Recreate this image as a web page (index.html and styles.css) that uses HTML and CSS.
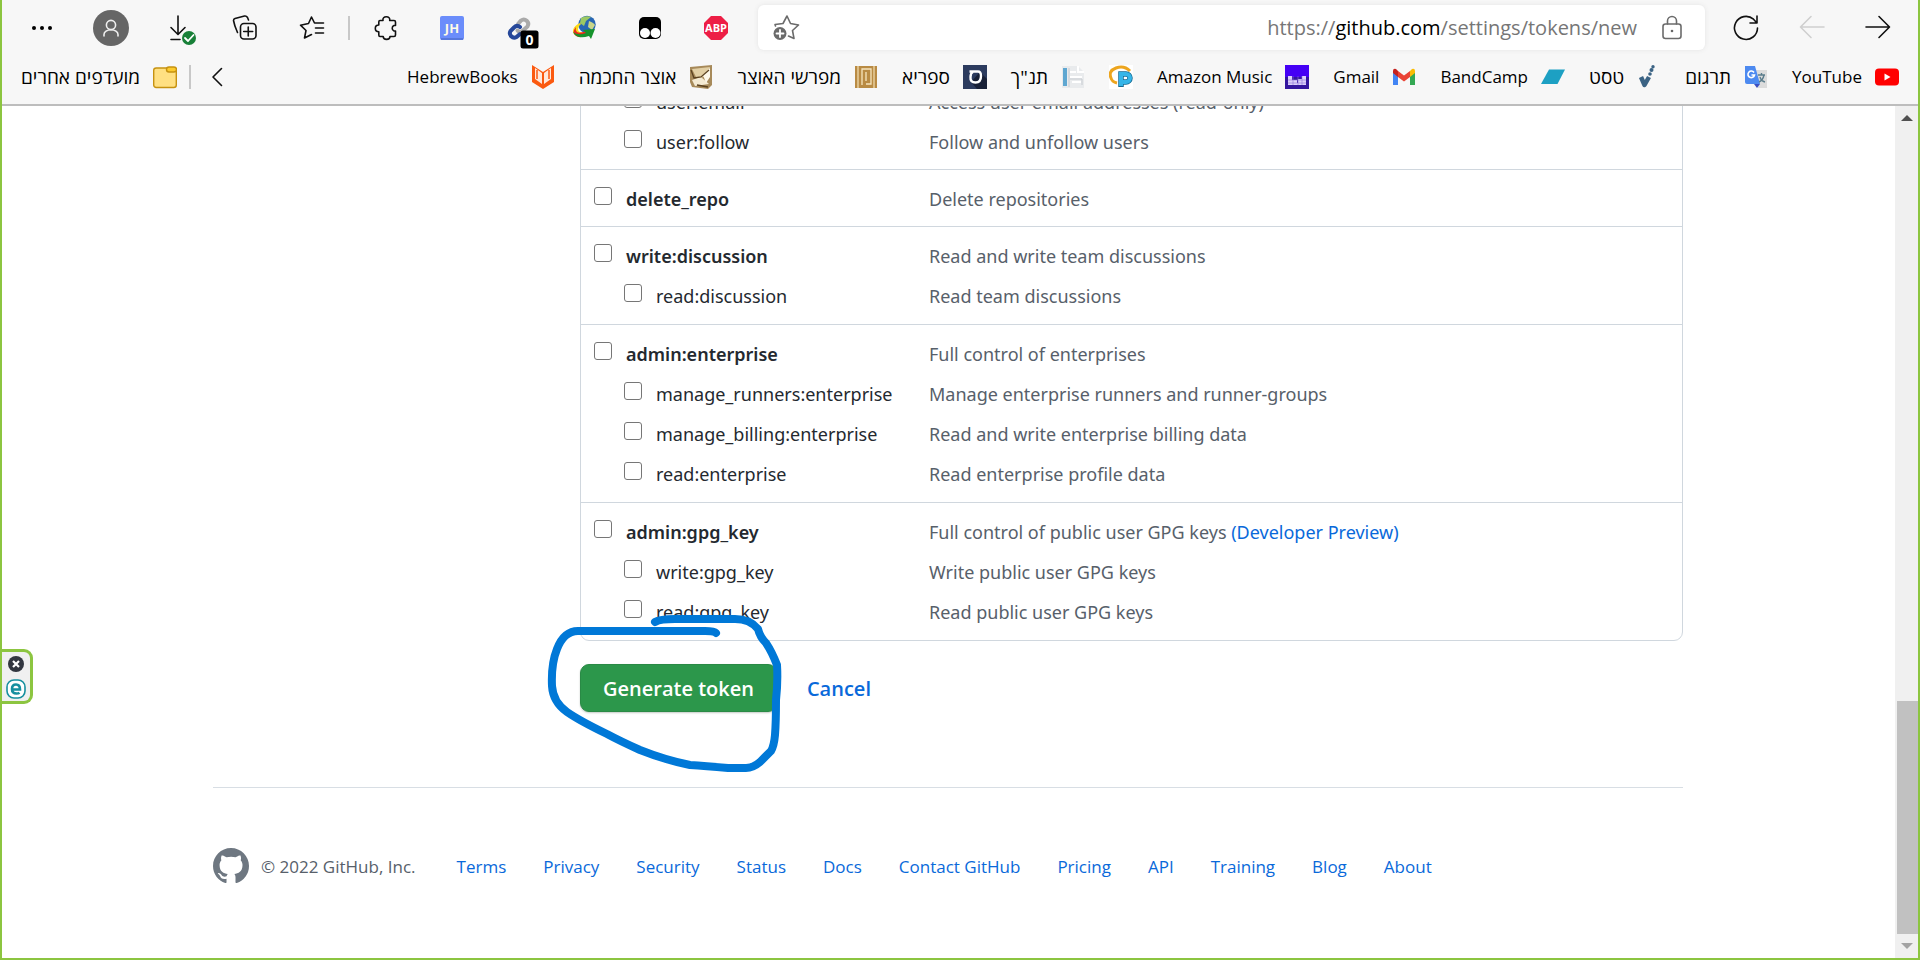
FILE: index.html
```
<!DOCTYPE html>
<html lang="en">
<head>
<meta charset="utf-8">
<title>New personal access token</title>
<link rel="stylesheet" href="styles.css">
</head>
<body>
<div class="window">
  <header class="chrome">
    <div class="toolbar">
      <div class="tools tools-main">
        <button class="tool" aria-label="More"><svg width="24" height="24" viewBox="0 0 24 24"><circle cx="2" cy="12" r="2"/><circle cx="10" cy="12" r="2"/><circle cx="18" cy="12" r="2"/></svg></button>
        <button class="tool avatar" aria-label="Profile"><svg class="line" width="24" height="24" viewBox="0 0 24 24"><circle cx="12" cy="9" r="4.600"/><path d="M5 20v-1.500a7 4.800 0 0 1 14 0V20"/></svg></button>
        <button class="tool" aria-label="Downloads"><svg class="line" width="42" height="26" viewBox="-13 0 42 26"><path d="M8 1v18M1 12.500l7 7 7-7M1 24.500h9"/><circle cx="19" cy="23" r="7" fill="#188038" stroke="none"/><path d="M15 23l3 3 5.500-6" stroke="#fff" stroke-width="1.800"/></svg></button>
        <button class="tool" aria-label="Collections"><svg class="line" width="26" height="26" viewBox="0 0 26 26"><path d="M5.500 17.500C3.500 13 2 8.500 1.500 5.500Q1.500 4 3 3.500L12.500 1Q14.500.700 15.500 2.500L16.500 5"/><rect x="8.500" y="8.500" width="15.500" height="15.500" rx="3.500"/><path d="M16.250 12v9M11.700 16.500h9"/></svg></button>
        <button class="tool" aria-label="Favorites"><svg class="line" width="26" height="26" viewBox="0 0 26 26"><path d="M22 8h-6.500L12.500 2 9.500 8.500 1.500 10.200 7 15.500 5.500 23 12.500 19.500M16.500 13h8M16.500 18h8M17 8h7.500"/></svg></button>
      </div>
      <span class="divider"></span>
      <div class="tools">
        <button class="tool" aria-label="Extensions"><svg class="line" width="24" height="24" viewBox="0 0 24 24"><path d="M9 4.500C8.500 2 10 .800 12.300.800S16.200 2 15.700 4.500H20Q21.500 4.500 21.500 6V9.500H20A3 3 0 0 0 20 15H21.500V19Q21.500 20.500 20 20.500H16C16 22.600 14.600 23.400 12.600 23.400S9.200 22.600 9.200 20.500H6Q4.800 20.500 4.800 19V15.800C2.500 15.800 1.300 14.500 1.300 12.300S2.500 9 4.800 9V6Q4.800 4.500 6 4.500Z"/></svg></button>
        <button class="tool" aria-label="JH"><svg width="24" height="24" viewBox="0 0 24 24"><rect width="24" height="24" rx="2" fill="#6b8dfb"/><path d="M1 23h22" stroke="#5777dc" stroke-width="2"/><text x="12" y="17" class="icon-text" font-size="13" fill="#fffbe8">JH</text></svg></button>
        <button class="tool" aria-label="Links"><svg width="26" height="26" viewBox="0 0 26 26"><g fill="none" stroke-width="4" stroke-linecap="round"><path d="M13 9l3-3.500a4.500 4.500 0 0 1 6.500 6L18 15.500q-3 2.500-5.500 0" stroke="#aaa"/><path d="M15 12q-3-2.500-6 .500l-3.500 3.500a4.400 4.400 0 0 0 6 6L15 19" stroke="#26489a"/></g><rect x="15.500" y="15.500" width="18" height="18" rx="2.500"/><text x="24.500" y="30" class="icon-text" font-size="14" fill="#fff">0</text></svg></button>
        <button class="tool" aria-label="Download manager"><svg width="26" height="26" viewBox="0 0 26 26"><circle cx="16" cy="9.500" r="8.700" fill="#2867b4"/><path d="M10 3q5-3 10-1l-5 4-2 5-4-3z" fill="#9cc963"/><path d="M18 6q5 2 6 4l-3 5-4-3z" fill="#c9d68a"/><path d="M9 8C2 11 0 17 4 20q5 3 11 0l-2-3q-6 1-6-3 0-3 3-5z" fill="#fbdb17"/><path d="M5 12Q0 18 5 21t13-2l-3-3q-6 3-9 1-2-2-1-5z" fill="#e52b20"/><path d="M2 17q4 8 16 4l2 3 4-10-12 1 3 3Q7 21 2 17z" fill="#16932c"/></svg></button>
        <button class="tool" aria-label="Script manager"><svg width="24" height="24" viewBox="0 0 24 24"><rect x="1" y="1" width="22" height="22" rx="5"/><circle cx="7" cy="17" r="5" fill="#fff"/><circle cx="17.500" cy="17" r="5" fill="#fff"/></svg></button>
        <button class="tool" aria-label="Adblock"><svg width="26" height="26" viewBox="0 0 26 26"><path d="M8 1h10l7 7v10l-7 7H8l-7-7V8z" fill="#ed1e45"/><text x="13" y="17" class="icon-text" font-size="11" fill="#fff">ABP</text></svg></button>
      </div>
      <div class="address">
        <button class="address-icon" aria-label="Add to favorites"><svg class="line grey" width="28" height="28" viewBox="0 0 28 28"><path d="M3.500 12L3 10.500 11 9.500 15 2 18.500 9.500 26.500 11 20.500 16.500 22 24.500 16.500 22"/><circle cx="8" cy="19.500" r="6.500" fill="#6b6b6b" stroke="none"/><path d="M8 16v7M4.500 19.500h7" stroke="#fff" stroke-width="1.800"/></svg></button>
        <a class="url" href="#">https://<span class="host">github.com</span>/settings/tokens/new</a>
        <button class="address-icon" aria-label="Site information"><svg class="line grey" width="22" height="26" viewBox="0 0 22 26"><rect x="2" y="9" width="18" height="14.500" rx="2.500"/><path d="M6.500 9V6a4.500 4.500 0 0 1 9 0v3"/><circle cx="11" cy="16" r="1.300" fill="#666" stroke="none"/></svg></button>
      </div>
      <div class="tools">
        <button class="tool" aria-label="Refresh"><svg class="line" width="26" height="26" viewBox="0 0 26 26"><path d="M24.500 13A11.500 11.500 0 1 1 20.500 4.200L23.500 7.500M24 1v7h-7"/></svg></button>
        <button class="tool" aria-label="Back" disabled><svg class="line pale" width="26" height="26" viewBox="0 0 26 26"><path d="M25 12H1.500M12 1.500L1.500 12 12 22.500"/></svg></button>
        <button class="tool" aria-label="Forward"><svg class="line" width="26" height="26" viewBox="0 0 26 26"><path d="M1 12h23M14 1.500L24.500 12 14 22.500"/></svg></button>
      </div>
    </div>
    <nav class="bookmarks">
      <a class="mark" href="#"><span class="he" lang="he">מועדפים אחרים</span><svg width="24" height="24" viewBox="0 0 24 24"><rect x=".700" y="3" width="22.600" height="19.500" rx="2.500" fill="#ffe082" stroke="#c69210" stroke-width="1.400"/><rect x="13.500" y="2" width="10" height="5" rx="2.500" fill="#fccb2e" stroke="#c69210" stroke-width="1.400"/></svg></a>
      <span class="divider"></span>
      <button class="overflow" aria-label="More bookmarks"><svg class="line" width="12" height="20" viewBox="0 0 12 20"><path d="M10.500 1.500L2 10l8.500 8.500"/></svg></button>
      <div class="marks">
        <a class="mark" href="#"><span>HebrewBooks</span><svg width="24" height="24" viewBox="0 0 24 24"><path d="M1 0L12 7 23 0V17L12 24 1 17Z" fill="#fb5a10"/><path d="M4 3l7 5v11l-7-5zM20 3l-7 5v11l7-5z" fill="#ffe9dc"/><path d="M6 5v9M18 5v9" stroke="#fb5a10" stroke-width="1.500"/></svg></a>
        <a class="mark" href="#"><span class="he" lang="he">אוצר החכמה</span><svg width="24" height="24" viewBox="0 0 24 24"><path d="M1 2L23 0v20l-4 4-16-2-2-5z" fill="#a78a5a"/><path d="M3 4l18-2-3 9-10 3z" fill="#e2cfa4"/><path d="M3 15l9-3 8 7-14 2z" fill="#f4ead2"/><path d="M14 10l7-7v9l-4 6z" fill="#fdf8ea"/><path d="M2 5l3 8 7-1 8-7M8 20l11 2" stroke="#5b4220" stroke-width="1.300" fill="none"/></svg></a>
        <a class="mark" href="#"><span class="he" lang="he">מפרשי האוצר</span><svg width="24" height="24" viewBox="0 0 24 24"><rect x="1" y="1" width="22" height="22" fill="#b98b44"/><path d="M4 1v22M20 1v22" stroke="#f3dfb2" stroke-width="1.200"/><path d="M8 20V4h9v15h-5M12 7v9" stroke="#f6e5bd" stroke-width="1.300" fill="none"/></svg></a>
        <a class="mark" href="#"><span class="he" lang="he">ספריא</span><svg width="24" height="24" viewBox="0 0 24 24"><path d="M0 0h24v24H0z" fill="#2c3b5e"/><path d="M17 7l7 7v10H14l-6-7z" fill="#182036"/><path d="M6.500 6.500H15q3 0 3 4.500 0 6.500-5.500 6.500T7.500 12q0-4 2.500-5" fill="none" stroke="#fff" stroke-width="2.400"/></svg></a>
        <a class="mark" href="#"><span class="he" lang="he">תנ"ך</span><svg width="24" height="24" viewBox="0 0 24 24"><path d="M1 1h16l6 6v16H1z" fill="#e9ebed"/><path d="M2 3h4v18H2z" fill="#5fa7d1"/><path d="M17 1v6h6M9 7h6M9 12h12M11 17h9" stroke="#fff" stroke-width="2" fill="none"/><path d="M8 3v19M9 14h12v6" stroke="#c7cbd0" fill="none"/></svg></a>
        <a class="mark" href="#" aria-label="CP"><svg width="24" height="24" viewBox="0 0 24 24"><path d="M0 0h24v24H0z" fill="#fff"/><path d="M21 6Q15 0 7 3T2 13q1 4 6 5" stroke="#eda51e" stroke-width="3" fill="none"/><path d="M12 22V9h5a4 4 0 0 1 0 8h-4" stroke="#176a91" stroke-width="5.500" fill="none"/><path d="M12 21V9h5a4 4 0 0 1 0 8h-4" stroke="#35b5e8" stroke-width="4" fill="none"/></svg></a>
        <a class="mark" href="#"><span>Amazon Music</span><svg width="24" height="24" viewBox="0 0 24 24"><path d="M0 0h24v24H0z" fill="#4400f5"/><path d="M0 12h24v12H0z" fill="#34169f"/><path d="M3 11h4v4h5v3h1v-4h4v-3h4v9H3z" fill="#dcd0fa"/><path d="M3 15h18M3 18h18M8 11v9M13 11v9M17 11v9" stroke="#8e72d9" stroke-width=".600"/></svg></a>
        <a class="mark" href="#"><span>Gmail</span><svg width="24" height="24" viewBox="0 0 24 24"><path d="M1 6v14h5V10z" fill="#4285f4"/><path d="M18 10v10h5V6z" fill="#34a853"/><path d="M6 6l6 4.500L18 6v6l-6 4.500L6 12z" fill="#ea4335"/><path d="M1 8V6q0-3 3-2l2 2v6z" fill="#c5221f"/><path d="M23 8V6q0-3-3-2l-2 2v6z" fill="#fbbc04"/></svg></a>
        <a class="mark" href="#"><span>BandCamp</span><svg width="24" height="24" viewBox="0 0 24 24"><path d="M8 4.500h16L16.500 19H0z" fill="#1da0c3"/></svg></a>
        <a class="mark" href="#"><span class="he" lang="he">טסט</span><svg width="24" height="24" viewBox="0 0 24 24"><path d="M4 12l3.500 8L12 12" stroke="#3b6384" stroke-width="4.500" fill="none" stroke-linejoin="round"/><g fill="#3b6384"><circle cx="13" cy="9" r="1.800"/><circle cx="14.500" cy="5" r="2"/><circle cx="16" cy="1.800" r="1.700"/></g></svg></a>
        <a class="mark" href="#"><span class="he" lang="he">תרגום</span><svg width="24" height="24" viewBox="0 0 24 24"><path d="M9 5h14v18H14z" fill="#dcdcdc"/><path d="M1 1h10l5 18H3q-2 0-2-2z" fill="#4d8af0"/><path d="M10 19h6l-3 4z" fill="#3b4fc0"/><path d="M14 10h7M17.500 8v2M20 10q-1 5-5 7M16 12q1 4 5 5" stroke="#5b7d8c" stroke-width="1.400" fill="none"/><path d="M10 7.500A3.300 3.300 0 1 0 10.500 10H7.500" stroke="#fff" stroke-width="1.600" fill="none"/></svg></a>
        <a class="mark" href="#"><span>YouTube</span><svg width="24" height="24" viewBox="0 0 24 24"><rect y="3.500" width="24" height="17" rx="4" fill="#f00"/><path d="M9.500 8.500v7l6-3.500z" fill="#fff"/></svg></a>
      </div>
    </nav>
  </header>

  <div class="viewport">
    <div class="page">
      <main class="content">
        <ul class="scopes">
          <li class="scope">
            <div class="row sub"><input type="checkbox" id="s1"><label for="s1">user:email</label><span class="desc">Access user email addresses (read-only)</span></div>
            <div class="row sub"><input type="checkbox" id="s2"><label for="s2">user:follow</label><span class="desc">Follow and unfollow users</span></div>
          </li>
          <li class="scope">
            <div class="row"><input type="checkbox" id="s3"><label for="s3">delete_repo</label><span class="desc">Delete repositories</span></div>
          </li>
          <li class="scope">
            <div class="row"><input type="checkbox" id="s4"><label for="s4">write:discussion</label><span class="desc">Read and write team discussions</span></div>
            <div class="subs">
              <div class="row sub"><input type="checkbox" id="s5"><label for="s5">read:discussion</label><span class="desc">Read team discussions</span></div>
            </div>
          </li>
          <li class="scope">
            <div class="row"><input type="checkbox" id="s6"><label for="s6">admin:enterprise</label><span class="desc">Full control of enterprises</span></div>
            <div class="subs">
              <div class="row sub"><input type="checkbox" id="s7"><label for="s7">manage_runners:enterprise</label><span class="desc">Manage enterprise runners and runner-groups</span></div>
              <div class="row sub"><input type="checkbox" id="s8"><label for="s8">manage_billing:enterprise</label><span class="desc">Read and write enterprise billing data</span></div>
              <div class="row sub"><input type="checkbox" id="s9"><label for="s9">read:enterprise</label><span class="desc">Read enterprise profile data</span></div>
            </div>
          </li>
          <li class="scope">
            <div class="row"><input type="checkbox" id="s10"><label for="s10">admin:gpg_key</label><span class="desc">Full control of public user GPG keys <a href="#">(Developer Preview)</a></span></div>
            <div class="subs">
              <div class="row sub"><input type="checkbox" id="s11"><label for="s11">write:gpg_key</label><span class="desc">Write public user GPG keys</span></div>
              <div class="row sub"><input type="checkbox" id="s12"><label for="s12">read:gpg_key</label><span class="desc">Read public user GPG keys</span></div>
            </div>
          </li>
        </ul>
        <div class="actions">
          <button class="generate">Generate token</button>
          <a class="cancel" href="#">Cancel</a>
          <svg class="ink" width="250" height="170" viewBox="540 610 250 170"><path d="M655 622Q660 619 675 619L735 619Q750 619 758 629Q760 637 766 643Q772 652 777 665Q778 682 776 700Q776 722 775 735Q774 746 771 751L760 762Q753 768 746 768L728 768Q705 766 690 765Q665 760 640 750Q620 741 607 734Q580 721 567 712Q553 702 552 686Q551 664 557 649Q564 631 578 631L705 631Q714 631 716 633"/></svg>
        </div>
      </main>
      <footer class="footer">
        <svg width="36" height="36" viewBox="0 0 16 16" fill="#6e7781"><path d="M8 0C3.580 0 0 3.580 0 8c0 3.540 2.290 6.530 5.470 7.590.400.070.550-.170.550-.380 0-.190-.010-.820-.010-1.490-2.010.370-2.530-.490-2.690-.940-.090-.230-.480-.940-.820-1.130-.280-.150-.680-.520-.010-.530.630-.010 1.080.580 1.230.820.720 1.210 1.870.870 2.330.660.070-.520.280-.870.510-1.070-1.780-.200-3.640-.890-3.640-3.950 0-.870.310-1.590.820-2.150-.080-.200-.360-1.020.080-2.120 0 0 .670-.210 2.200.820.640-.180 1.320-.270 2-.270s1.360.090 2 .270c1.530-1.040 2.200-.820 2.200-.820.440 1.100.160 1.920.080 2.120.510.560.820 1.270.820 2.150 0 3.070-1.870 3.750-3.650 3.950.290.250.540.730.540 1.480 0 1.070-.010 1.930-.010 2.200 0 .210.150.460.550.380A8.010 8.010 0 0 0 16 8c0-4.420-3.580-8-8-8z"/></svg>
        <span class="copyright">© 2022 GitHub, Inc.</span>
        <nav class="links"><a href="#">Terms</a><a href="#">Privacy</a><a href="#">Security</a><a href="#">Status</a><a href="#">Docs</a><a href="#">Contact GitHub</a><a href="#">Pricing</a><a href="#">API</a><a href="#">Training</a><a href="#">Blog</a><a href="#">About</a></nav>
      </footer>
    </div>
    <div class="scrollbar">
      <svg class="arrow" width="12" height="6" viewBox="0 0 12 6" fill="#505050"><path d="M6 0l6 6H0z"/></svg>
      <div class="track"><div class="thumb"></div></div>
      <svg class="arrow" width="12" height="6" viewBox="0 0 12 6" fill="#a3a3a3"><path d="M0 0h12L6 6z"/></svg>
    </div>
    <aside class="dock">
      <button aria-label="Close"><svg width="20" height="20" viewBox="0 0 20 20"><circle cx="10" cy="10" r="8" fill="#32363f"/><path d="M7 7l6 6M13 7l-6 6" stroke="#fff" stroke-width="2.200"/></svg></button>
      <button aria-label="Open"><svg width="20" height="20" viewBox="0 0 20 20"><rect x="1" y="1" width="18" height="18" rx="7" fill="#fff" stroke="#168f9f" stroke-width="1.600"/><path d="M6 10.500h8Q14 5.500 10 5.500T6 10q0 4.500 4.500 4.500 2 0 3-.800" fill="none" stroke="#168f9f" stroke-width="2.600"/></svg></button>
    </aside>
  </div>
</div>
</body>
</html>
```

FILE: styles.css
```
* { box-sizing: border-box; }

body {
  margin: 0;
  font-family: "Open Sans", "Noto Sans", "DejaVu Sans", sans-serif;
  font-size: 18px;
  color: #24292f;
  background: #fff;
}

a { color: #0969da; text-decoration: none; }

button {
  display: flex;
  align-items: center;
  justify-content: center;
  padding: 0;
  border: 0;
  background: none;
  font-family: inherit;
}

.window {
  display: flex;
  flex-direction: column;
  height: 100vh;
  border: solid #8cc540;
  border-width: 0 2px 2px;
}

.chrome {
  flex: none;
  background: #f7f7f7;
  border-bottom: 2px solid #bdbdbd;
}

.toolbar {
  display: flex;
  align-items: center;
  padding: 5px 22px 5px 24px;
}

.tools { display: flex; gap: 30px; }
.tools-main { gap: 31px; }
.tool { width: 36px; height: 36px; }
.tool svg { flex: none; overflow: visible; }
.line { fill: none; stroke: #111; stroke-width: 1.6px; stroke-linecap: round; stroke-linejoin: round; }
.grey { stroke: #6b6b6b; }
.pale { stroke: #cfcfcf; }
.icon-text { font-family: "Open Sans", sans-serif; font-weight: 700; text-anchor: middle; }

.avatar { border-radius: 50%; background: #666; }
.avatar .line { stroke: #eee; }

.divider { width: 2px; height: 24px; background: #c8c8c8; margin: 0 18px; }

.address {
  flex: 1;
  display: flex;
  align-items: center;
  height: 45px;
  margin: 0 23px 0 24px;
  padding: 0 22px 0 14px;
  border-radius: 6px;
  background: #fff;
  box-shadow: 0 0 5px #e4e4e4;
}

.url { margin-left: auto; margin-right: 24px; font-size: 20px; color: #767676; }
.host { color: #000; }

.bookmarks {
  display: flex;
  align-items: center;
  height: 49px;
  padding: 0 19px 5px;
}

.bookmarks .divider { margin: 0 20px 0 12px; }
.marks { flex: 1; display: flex; justify-content: flex-end; gap: 24px; }
.mark { display: flex; align-items: center; gap: 13px; font-size: 17px; line-height: 24px; color: #000; white-space: nowrap; }
.mark svg { flex: none; }
.he { font-size: 19px; }

.viewport { position: relative; flex: 1; min-height: 0; display: flex; }

.page {
  flex: 1;
  display: flex;
  flex-direction: column;
  justify-content: flex-end;
  align-items: center;
  padding-right: 1px;
  overflow: hidden;
}

.content, .footer { width: 100%; max-width: 1470px; }
.content { padding-left: 367px; font-family: "Noto Sans", "Open Sans", sans-serif; }

.scopes {
  margin: 0;
  padding: 0;
  list-style: none;
  border: 1px solid #d0d7de;
  border-radius: 9px;
}

.scope { padding: 9px 0 7px 13px; }
.scope + .scope { border-top: 1px solid #d0d7de; }
.subs { margin-bottom: 8px; }
.scope:has(.subs) { padding-bottom: 0; }

.row { display: grid; grid-template-columns: 32px 303px 1fr; align-items: center; height: 40px; font-weight: 600; }
.row.sub { grid-template-columns: 32px 273px 1fr; padding-left: 30px; font-weight: 400; }
.desc { font-weight: 400; color: #57606a; }

.row input {
  appearance: none;
  width: 18px;
  height: 18px;
  margin: 0 0 6px;
  border: 1px solid #767676;
  border-radius: 3px;
  background: #fff;
}

.actions { position: relative; display: flex; align-items: center; gap: 30px; margin: 23px 0 75px; font-family: "Open Sans", "Noto Sans", sans-serif; font-size: 20px; }

.generate {
  height: 48px;
  padding: 0 22px;
  border: 1px solid #2a8a46;
  border-radius: 9px;
  background: #2c974b;
  color: #fff;
  font-size: 20px;
  font-weight: 600;
  box-shadow: 0 1px 2px #c5cbc7;
}

.cancel { font-weight: 600; }

.ink { position: absolute; left: -40px; top: -54px; fill: none; stroke: #0078d7; stroke-width: 8px; stroke-linecap: round; stroke-linejoin: round; pointer-events: none; }

.footer {
  display: flex;
  align-items: center;
  padding: 60px 0 74px;
  border-top: 1px solid #d8dee4;
  font-size: 17px;
  color: #57606a;
}

.copyright { margin: 0 41px 0 12px; }
.links { display: flex; gap: 37px; }

.scrollbar { display: flex; flex-direction: column; align-items: center; width: 23px; background: #f0f0f0; }
.arrow { margin: 9px 0; }
.track { flex: 1; align-self: stretch; display: flex; flex-direction: column; justify-content: flex-end; padding-left: 2px; }
.thumb { height: 29%; background: #c1c1c1; }

.dock {
  position: absolute;
  left: 0;
  top: 543px;
  padding: 2px 4px;
  display: grid;
  gap: 5px;
  border: 3px solid #8cc540;
  border-left: 0;
  border-radius: 0 9px 9px 0;
  background: #f0f0f0;
}
```
